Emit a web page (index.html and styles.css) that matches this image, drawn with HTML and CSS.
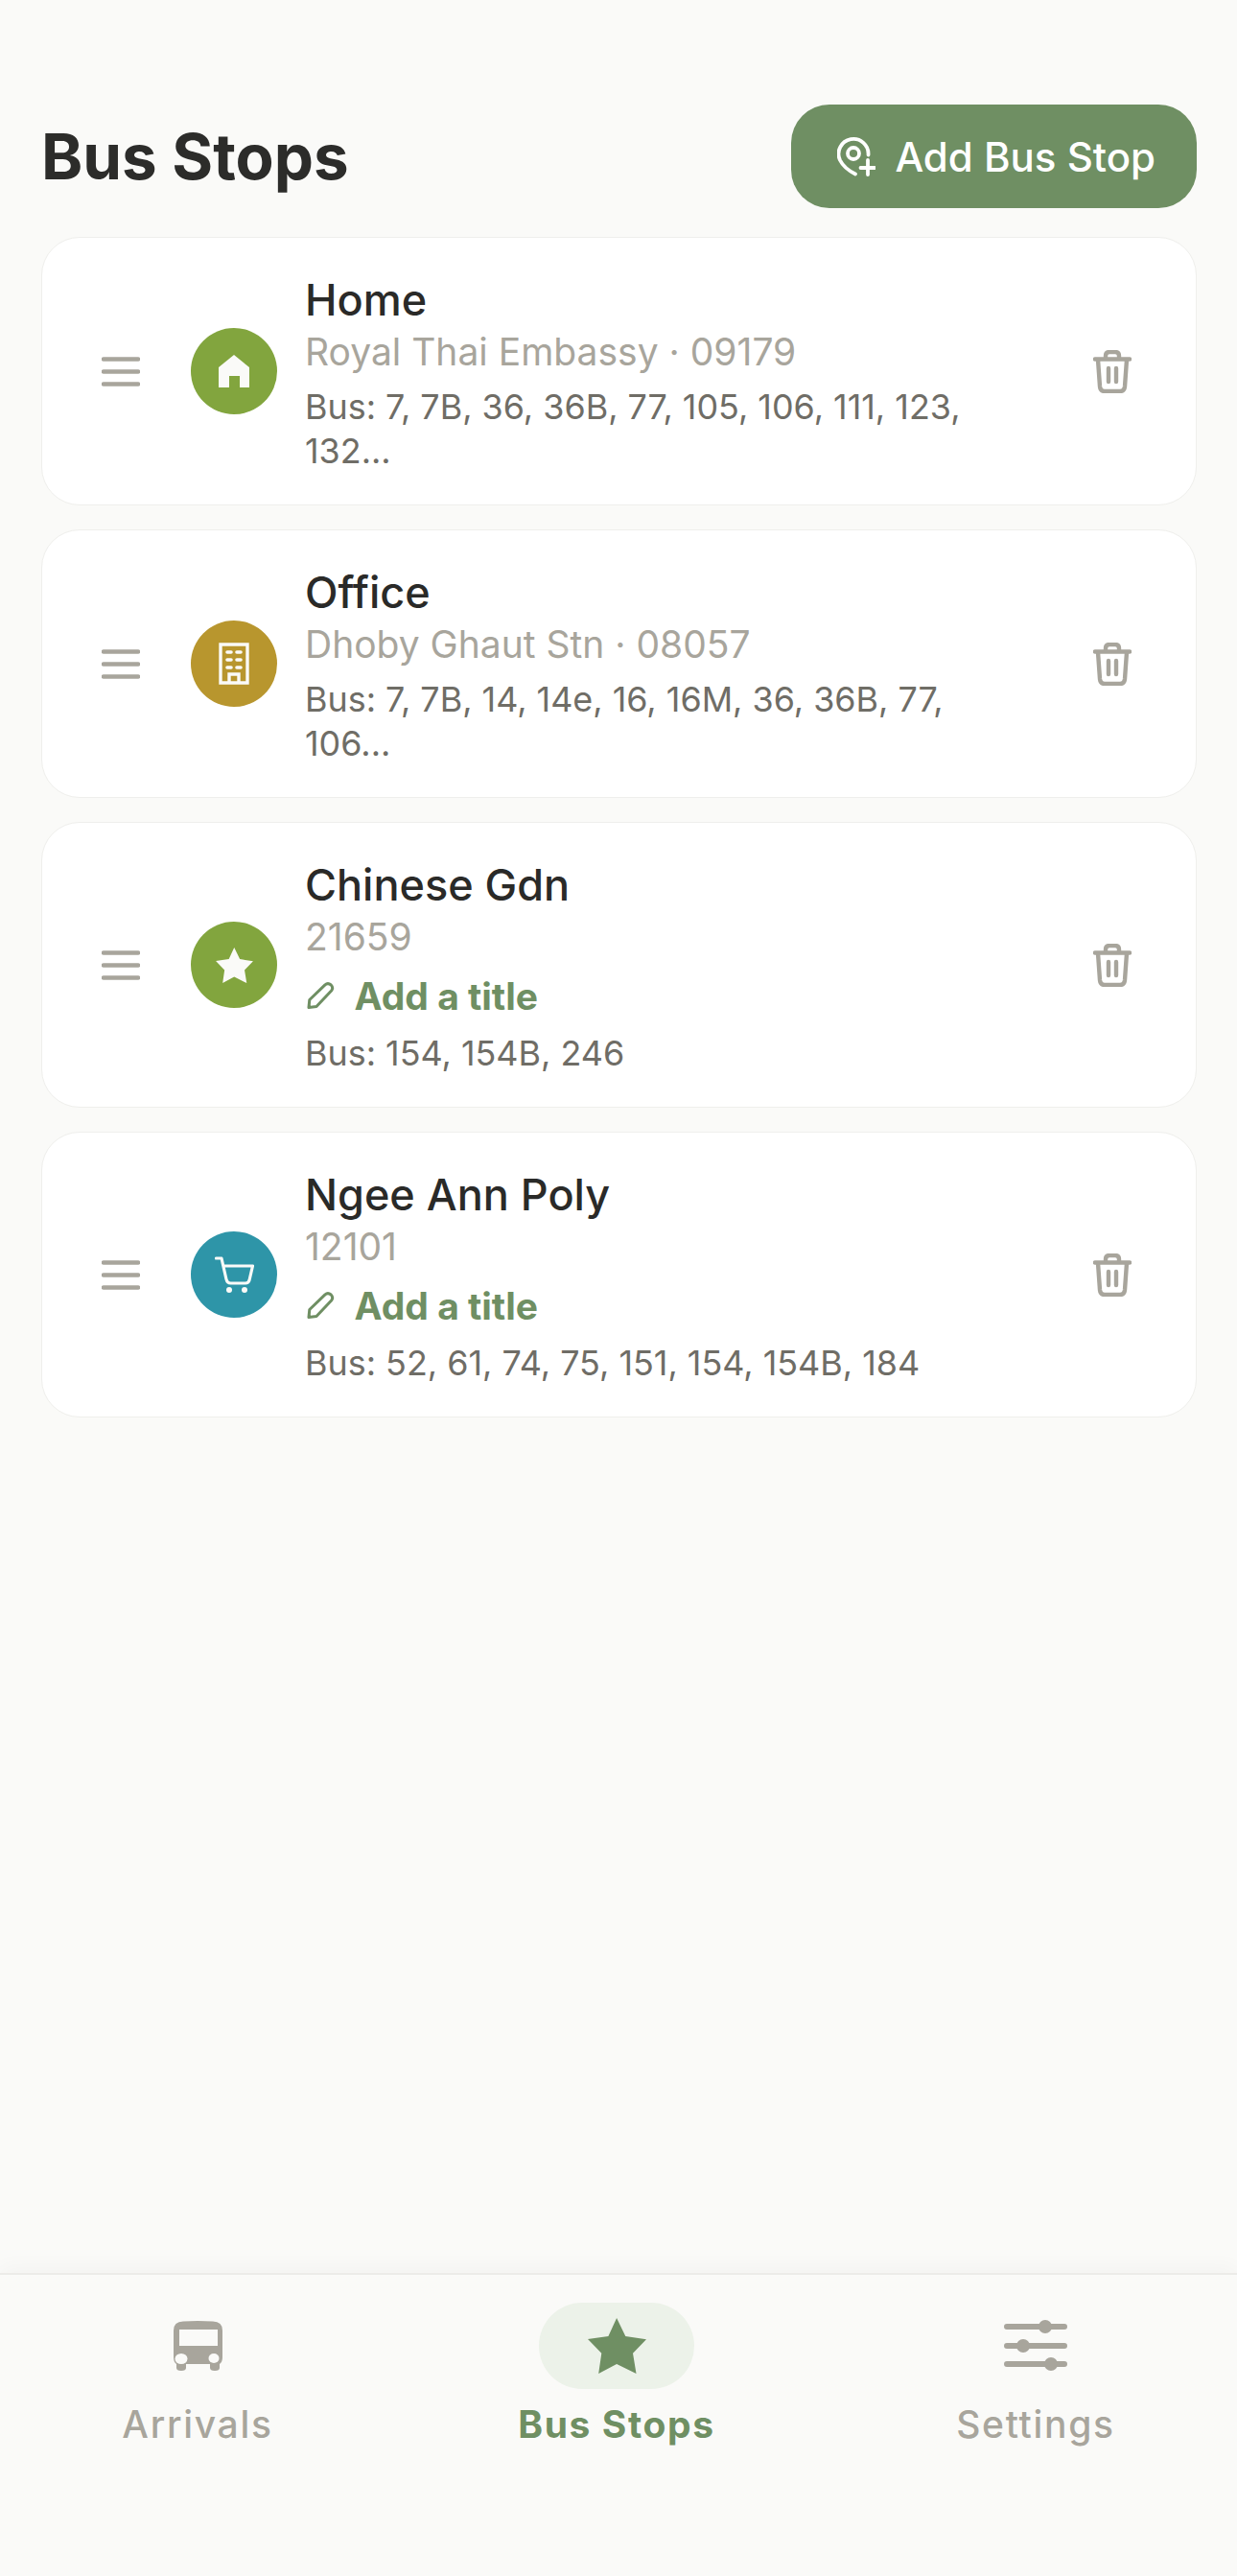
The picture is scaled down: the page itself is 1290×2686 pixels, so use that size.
FILE: index.html
```html
<!DOCTYPE html>
<html lang="en">
<head>
  <meta charset="UTF-8" />
  <meta name="viewport" content="width=device-width, initial-scale=1.0"/>
  <title>Bus Stops</title>
  <link rel="stylesheet" href="styles.css">
</head>
<body>
  <!-- Iconos repetidos -->
  <svg class="defs" width="0" height="0">
    <symbol id="handle" viewBox="0 0 40 31">
      <path d="M2 2.5H38M2 15.5H38M2 28.5H38" fill="none" stroke="currentColor" stroke-width="4.5" stroke-linecap="round"/>
    </symbol>
    <symbol id="trash" viewBox="0 0 40 45">
      <path d="M2 9.5H38M5 10L7 38Q7.5 43 12 43H28Q32.5 43 33 38L35 10M13 9V6Q13 2 17 2H23Q27 2 27 6V9M16 19V33M24 19V33" fill="none" stroke="currentColor" stroke-width="4.4" stroke-linecap="round" stroke-linejoin="round"/>
    </symbol>
    <symbol id="pencil" viewBox="0 0 29 28">
      <path d="M2 26.5L2.8 18.5L19 2.8Q22 0.4 25.2 3Q28 6 25.6 9L10 25.5Z" fill="none" stroke="currentColor" stroke-width="3" stroke-linejoin="round"/>
    </symbol>
  </svg>

  <div class="screen">
    <main class="content">
      <div class="header">
        <h1 class="title">Bus Stops</h1>
        <button class="add-btn">
          <svg class="add-icon" viewBox="0 0 40 42">
            <path d="M32.5 19.5A15.5 15.5 0 1 0 3 25C6 31 12 36 19 39.5" fill="none" stroke="currentColor" stroke-width="3.8" stroke-linecap="round"/>
            <circle cx="17" cy="18" r="6" fill="none" stroke="currentColor" stroke-width="3.8"/>
            <path d="M32 25V40M24.5 33H39.5" fill="none" stroke="currentColor" stroke-width="3.8" stroke-linecap="round"/>
          </svg>
          Add Bus Stop
        </button>
      </div>

      <div class="stop-list">
        <div class="stop-card">
          <svg class="handle"><use href="#handle"/></svg>
          <div class="stop-badge badge-green">
            <svg class="icon-home" viewBox="0 0 32 34">
              <path d="M16 0L32 13V34H22V22H11V34H0V13Z" fill="currentColor"/>
            </svg>
          </div>
          <div class="stop-info">
            <div class="stop-name">Home</div>
            <div class="stop-sub">Royal Thai Embassy · 09179</div>
            <div class="stop-bus stop-bus-gap">Bus: 7, 7B, 36, 36B, 77, 105, 106, 111, 123, 132...</div>
          </div>
          <svg class="trash"><use href="#trash"/></svg>
        </div>

        <div class="stop-card">
          <svg class="handle"><use href="#handle"/></svg>
          <div class="stop-badge badge-gold">
            <svg class="icon-building" viewBox="0 0 32 44">
              <path d="M2 2H30V42H2Z" fill="none" stroke="currentColor" stroke-width="3.4"/>
              <path d="M9 10H13M19 10H23M9 18H13M19 18H23M9 26H13M19 26H23" fill="none" stroke="currentColor" stroke-width="3.6" stroke-linecap="round"/>
              <path d="M11 42V33H21V42" fill="none" stroke="currentColor" stroke-width="3.4"/>
            </svg>
          </div>
          <div class="stop-info">
            <div class="stop-name">Office</div>
            <div class="stop-sub">Dhoby Ghaut Stn · 08057</div>
            <div class="stop-bus stop-bus-gap">Bus: 7, 7B, 14, 14e, 16, 16M, 36, 36B, 77, 106...</div>
          </div>
          <svg class="trash"><use href="#trash"/></svg>
        </div>

        <div class="stop-card">
          <svg class="handle"><use href="#handle"/></svg>
          <div class="stop-badge badge-green">
            <svg class="icon-star" viewBox="0 0 61 58">
              <path d="M30.1 0L39.3 19L61 22.3L47 36.7L50.5 58L30.1 48L11.2 58L14.3 36.7L0 22L21.4 19Z" fill="currentColor"/>
            </svg>
          </div>
          <div class="stop-info">
            <div class="stop-name">Chinese Gdn</div>
            <div class="stop-sub">21659</div>
            <div class="add-title">
              <svg class="pencil"><use href="#pencil"/></svg>
              Add a title
            </div>
            <div class="stop-bus">Bus: 154, 154B, 246</div>
          </div>
          <svg class="trash"><use href="#trash"/></svg>
        </div>

        <div class="stop-card">
          <svg class="handle"><use href="#handle"/></svg>
          <div class="stop-badge badge-teal">
            <svg class="icon-cart" viewBox="0 0 41 39">
              <path d="M1.5 2H7L12 24Q13 28 16.5 28H32Q35 28 36 25L39.5 10H9" fill="none" stroke="currentColor" stroke-width="3.2" stroke-linecap="round" stroke-linejoin="round"/>
              <circle cx="15" cy="35" r="3" fill="currentColor"/>
              <circle cx="31" cy="35" r="3" fill="currentColor"/>
            </svg>
          </div>
          <div class="stop-info">
            <div class="stop-name">Ngee Ann Poly</div>
            <div class="stop-sub">12101</div>
            <div class="add-title">
              <svg class="pencil"><use href="#pencil"/></svg>
              Add a title
            </div>
            <div class="stop-bus">Bus: 52, 61, 74, 75, 151, 154, 154B, 184</div>
          </div>
          <svg class="trash"><use href="#trash"/></svg>
        </div>
      </div>
    </main>

    <nav class="tab-bar">
      <div class="tab">
        <div class="tab-icon">
          <svg class="icon-bus" viewBox="0 0 51 52">
            <path d="M0 10Q0 1 10 0.6Q25 -0.4 41 0.6Q51 1 51 10V38Q51 43 48 45V49Q48 52 43 52Q38 52 38 49V45H13V49Q13 52 8 52Q3 52 3 49V45Q0 43 0 38Z" fill="currentColor"/>
            <rect x="6" y="9" width="40" height="17" fill="#fafaf8"/>
            <ellipse cx="8" cy="39.5" rx="6.5" ry="5.5" fill="#fafaf8"/>
            <ellipse cx="42" cy="39" rx="5.5" ry="5" fill="#fafaf8"/>
          </svg>
        </div>
        <span class="tab-label">Arrivals</span>
      </div>
      <div class="tab tab-active">
        <div class="tab-icon">
          <svg class="icon-nav-star" viewBox="0 0 61 58">
            <path d="M30.1 0L39.3 19L61 22.3L47 36.7L50.5 58L30.1 48L11.2 58L14.3 36.7L0 22L21.4 19Z" fill="currentColor"/>
          </svg>
        </div>
        <span class="tab-label">Bus Stops</span>
      </div>
      <div class="tab">
        <div class="tab-icon">
          <svg class="icon-sliders" viewBox="0 0 66 54">
            <path d="M3 7H63M3 27H63M3 46H63" fill="none" stroke="currentColor" stroke-width="6" stroke-linecap="round"/>
            <circle cx="43" cy="7" r="7" fill="currentColor"/>
            <circle cx="20" cy="27" r="7" fill="currentColor"/>
            <circle cx="49" cy="46" r="7" fill="currentColor"/>
          </svg>
        </div>
        <span class="tab-label">Settings</span>
      </div>
    </nav>
  </div>
</body>
</html>
```

FILE: styles.css
```css
* {
  margin: 0;
  padding: 0;
  box-sizing: border-box;
}

body {
  font-family: 'Inter', sans-serif;
  background: #fafaf8;
  color: #2a2a28;
}

.defs {
  display: block;
}

.screen {
  height: 2686px;
  display: flex;
  flex-direction: column;
}

.content {
  flex: 1;
  padding: 109px 42px 0 43px;
}

.header {
  display: flex;
  justify-content: space-between;
  align-items: center;
  margin-bottom: 30px;
}

.title {
  font-size: 65.5px;
  font-weight: 700;
  color: #2c2c2a;
}

.add-btn {
  display: flex;
  align-items: center;
  gap: 20px;
  height: 108px;
  padding: 0 43px 0 48px;
  border: none;
  border-radius: 40px;
  background: #6f8f63;
  color: #fff;
  font-family: inherit;
  font-size: 42px;
  font-weight: 500;
}

.add-icon {
  width: 40px;
  height: 42px;
}

.stop-list {
  display: flex;
  flex-direction: column;
  gap: 25px;
}

.stop-card {
  display: flex;
  align-items: center;
  padding: 34px 67px 34px 62px;
  background: #fff;
  border: 1.5px solid #efefec;
  border-radius: 40px;
}

.handle {
  width: 40px;
  height: 31px;
  color: #a8a59c;
  flex-shrink: 0;
}

.stop-badge {
  width: 90px;
  height: 90px;
  margin-left: 53px;
  border-radius: 50%;
  display: flex;
  justify-content: center;
  align-items: center;
  color: #fafaf8;
  flex-shrink: 0;
}

.badge-green { background: #82a53e; }
.badge-gold { background: #b8962e; }
.badge-teal { background: #2e95a8; }

.icon-home { width: 32px; height: 34px; }
.icon-building { width: 32px; height: 44px; }
.icon-star { width: 39px; height: 37px; }
.icon-cart { width: 41px; height: 39px; }

.stop-info {
  flex: 1;
  min-width: 0;
  margin: 0 80px -1px 29px;
  padding-top: 1px;
}

.stop-name {
  font-size: 45px;
  line-height: 60px;
  font-weight: 450;
  color: #2a2a28;
}

.stop-sub {
  font-size: 39px;
  line-height: 48px;
  color: #a8a59c;
}

.stop-bus {
  font-size: 35.9px;
  line-height: 46px;
  color: #6f6d66;
}

.stop-bus-gap {
  margin-top: 10px;
}

.add-title {
  display: flex;
  align-items: center;
  gap: 20.5px;
  height: 50px;
  margin: 12px 0;
  font-size: 39px;
  font-weight: 700;
  color: #6f8f63;
}

.pencil {
  width: 29px;
  height: 28px;
  margin-left: 2px;
}

.trash {
  width: 40px;
  height: 45px;
  color: #a8a59c;
  flex-shrink: 0;
}

/* Barra inferior */
.tab-bar {
  height: 316px;
  padding: 29px 95px 0 91px;
  display: flex;
  justify-content: space-between;
  background: #fafaf8;
  border-top: 2px solid #ecebe8;
  box-shadow: 0 -6px 20px rgba(0,0,0,0.03);
}

.tab {
  width: 230px;
  display: flex;
  flex-direction: column;
  align-items: center;
  color: #a8a59c;
}

.tab-active {
  color: #6f8f63;
}

.tab-icon {
  width: 162px;
  height: 90px;
  border-radius: 45px;
  display: flex;
  justify-content: center;
  align-items: center;
}

.tab-active .tab-icon {
  background: #ecf2e9;
}

.tab-label {
  margin-top: 13px;
  font-size: 39px;
  line-height: 48px;
  font-weight: 450;
  letter-spacing: 1.7px;
}

.tab-active .tab-label {
  font-weight: 700;
  letter-spacing: 1.6px;
}

.icon-bus { width: 51px; height: 52px; }
.icon-nav-star { width: 61px; height: 58px; }
.icon-sliders { width: 66px; height: 54px; }
```
